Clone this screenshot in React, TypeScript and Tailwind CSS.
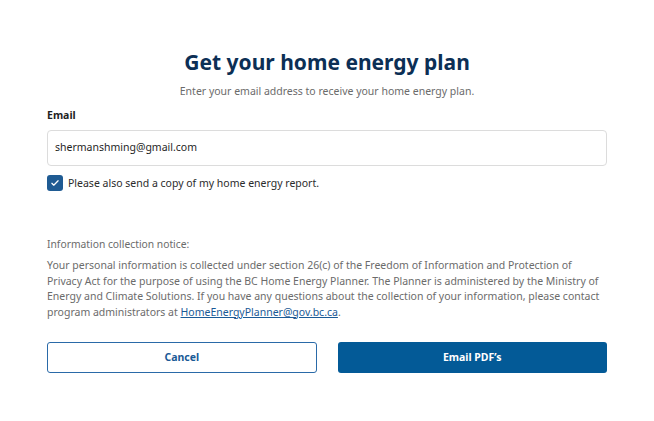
import type { JSX } from 'react';

export default function App(): JSX.Element {
  return (
    <div className="min-h-[421px] w-full bg-white font-['Noto_Sans',sans-serif]">
      <div className="mx-auto flex w-[654px] flex-col px-[47px] pt-[47px]">
        <h1 className="text-center text-[21px] font-bold leading-[30px] text-[#0c2f55]">
          Get your home energy plan
        </h1>
        <p className="mt-[6px] text-center text-[10.5px] leading-[16px] text-[#6b6b6b]">
          Enter your email address to receive your home energy plan.
        </p>

        <label className="mt-[8px] text-[10.5px] font-bold leading-[16px] text-[#1f1f1f]">Email</label>
        <div className="mt-[7px] flex h-[36px] items-center rounded-[4px] border border-[#dcdcdc] px-[7px] text-[10.5px] text-[#1f1f1f]">
          shermanshming@gmail.com
        </div>

        <div className="mt-[9px] flex items-center gap-[5px]">
          <span className="flex h-[16px] w-[16px] items-center justify-center rounded-[3px] bg-[#1f5b93]">
            <svg viewBox="0 0 16 16" className="h-[10px] w-[10px]" fill="none" stroke="white" strokeWidth="2" strokeLinecap="round" strokeLinejoin="round">
              <path d="M3 8.5l3 3 7-7" />
            </svg>
          </span>
          <span className="text-[10.5px] leading-[16px] text-[#2b2b2b]">
            Please also send a copy of my home energy report.
          </span>
        </div>

        <p className="mt-[45px] text-[10.3px] leading-[16px] text-[#6b6b6b]">Information collection notice:</p>
        <p className="mt-[6px] text-[10.5px] leading-[15.5px] text-[#6b6b6b]">
          Your personal information is collected under section 26(c) of the Freedom of Information and Protection of
          <br />
          Privacy Act for the purpose of using the BC Home Energy Planner. The Planner is administered by the Ministry of
          <br />
          Energy and Climate Solutions. If you have any questions about the collection of your information, please contact
          <br />
          program administrators at{' '}
          <a href="#" className="text-[#1a5a96] underline">
            HomeEnergyPlanner@gov.bc.ca
          </a>
          .
        </p>

        <div className="mt-[22px] grid grid-cols-2 gap-[21px]">
          <button className="h-[31px] rounded-[3px] border border-[#2a6aa8] bg-white text-[10.5px] font-bold text-[#1a5a96]">
            Cancel
          </button>
          <button className="h-[31px] rounded-[3px] bg-[#035a97] text-[10.5px] font-bold text-white">
            Email PDF’s
          </button>
        </div>
      </div>
    </div>
  );
}
